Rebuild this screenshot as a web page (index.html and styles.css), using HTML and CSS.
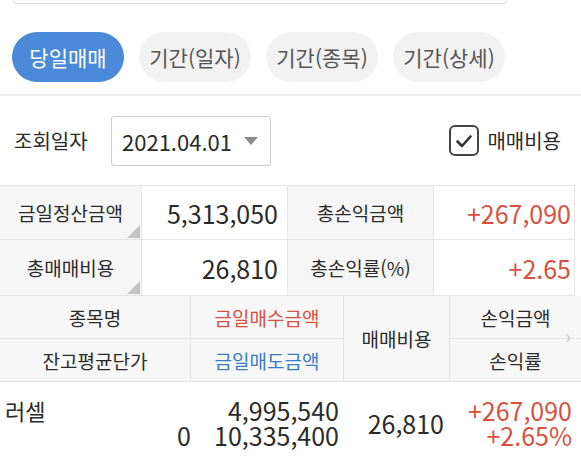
FILE: index.html
```html
<!DOCTYPE html>
<html lang="ko">
<head>
<meta charset="utf-8">
<link rel="stylesheet" href="styles.css">
</head>
<body>
<div class="topbox"></div>
<div class="tabs">
  <div class="tab active">당일매매</div>
  <div class="tab">기간(일자)</div>
  <div class="tab">기간(종목)</div>
  <div class="tab">기간(상세)</div>
</div>
<div class="sep"></div>
<div class="query">
  <div class="qlabel">조회일자</div>
  <div class="select">
    <span class="date">2021.04.01</span>
    <span class="arrow"></span>
  </div>
  <div class="check">
    <span class="box">
      <svg width="22" height="22" viewBox="0 0 22 22"><path d="M4.5 11.5 L9 16 L17.5 6.5" fill="none" stroke="#333" stroke-width="2.6" stroke-linecap="round" stroke-linejoin="round"/></svg>
    </span>
    <span class="clabel">매매비용</span>
  </div>
</div>
<div class="summary">
  <div class="slabel corner">금일정산금액</div>
  <div class="sval">5,313,050</div>
  <div class="slabel">총손익금액</div>
  <div class="sval red">+267,090</div>
  <div class="slabel corner">총매매비용</div>
  <div class="sval">26,810</div>
  <div class="slabel">총손익률(%)</div>
  <div class="sval red">+2.65</div>
</div>
<div class="head">
  <div class="hc">종목명</div>
  <div class="hc red">금일매수금액</div>
  <div class="hc span2">매매비용</div>
  <div class="hc">손익금액</div>
  <div class="hc">잔고평균단가</div>
  <div class="hc blue">금일매도금액</div>
  <div class="hc">손익률</div>
  <span class="chev">›</span>
</div>
<div class="row">
  <div class="dc c1">
    <div class="name">러셀</div>
    <div class="num">0</div>
  </div>
  <div class="dc c2">
    <div>4,995,540</div>
    <div>10,335,400</div>
  </div>
  <div class="dc c3">26,810</div>
  <div class="dc c4 red">
    <div>+267,090</div>
    <div>+2.65%</div>
  </div>
</div>
</body>
</html>
```
FILE: styles.css
```css
* { box-sizing: border-box; }
html, body { margin: 0; padding: 0; background: #fff; }
body {
  width: 581px;
  height: 464px;
  overflow: hidden;
  font-family: "Noto Sans CJK KR", "Noto Sans", sans-serif;
  color: #2b2b2b;
}
.red { color: #d9503f; }
.blue { color: #3b7bc4; }

.topbox {
  margin: 0 74px 0 13px;
  height: 4px;
  border: 1px solid #dcdcdc;
  border-top: none;
  border-radius: 0 0 6px 6px;
}

.tabs {
  display: flex;
  gap: 15px;
  padding: 28px 0 0 12px;
}
.tab {
  width: 112px;
  height: 50px;
  border-radius: 25px;
  background: #f2f2f2;
  color: #555;
  font-size: 21px;
  display: flex;
  align-items: center;
  justify-content: center;
}
.tab.active {
  background: #4a8ad9;
  color: #fff;
}

.sep {
  margin-top: 12px;
  height: 2px;
  background: #eeeeee;
}

.query {
  height: 89px;
  display: flex;
  align-items: center;
  padding: 0 20px 0 14px;
}
.qlabel {
  font-size: 20px;
  width: 97px;
}
.select {
  width: 160px;
  height: 50px;
  border: 1px solid #cfcfcf;
  border-radius: 3px;
  display: flex;
  align-items: center;
  padding: 0 12px 0 10px;
  justify-content: space-between;
}
.date { font-size: 22px; }
.arrow {
  width: 0; height: 0;
  border-left: 7px solid transparent;
  border-right: 7px solid transparent;
  border-top: 8px solid #8a8a8a;
}
.check {
  margin-left: auto;
  display: flex;
  align-items: center;
  gap: 8px;
}
.box {
  width: 30px;
  height: 31px;
  border: 2.5px solid #444;
  border-radius: 6px;
  display: flex;
  align-items: center;
  justify-content: center;
}
.clabel { font-size: 20px; }

.summary {
  display: grid;
  grid-template-columns: 142px 146px 146px 141px;
  grid-template-rows: 54px 56px;
  border-top: 1px solid #e6e6e6;
  width: 575px;
}
.summary > div {
  border-right: 1px solid #e6e6e6;
  border-bottom: 1px solid #e6e6e6;
  display: flex;
  align-items: center;
  position: relative;
}
.slabel {
  background: #f6f6f6;
  justify-content: center;
  font-size: 19px;
}
.corner::after {
  content: "";
  position: absolute;
  right: 1px;
  bottom: 1px;
  width: 0; height: 0;
  border-left: 13px solid transparent;
  border-bottom: 13px solid #c4c4c4;
}
.sval {
  justify-content: flex-end;
  padding-right: 9px;
  font-size: 25px;
}
.summary .sval:nth-child(4), .summary .sval:nth-child(8) { padding-right: 3px; }

.head {
  display: grid;
  grid-template-columns: 191px 153px 106px 131px;
  grid-template-rows: 43px 43px;
  background: #f7f7f7;
  position: relative;
}
.hc {
  border-right: 1px solid #e3e3e3;
  border-bottom: 1px solid #e3e3e3;
  display: flex;
  align-items: center;
  justify-content: center;
  font-size: 19px;
}
.hc:nth-child(4), .hc:nth-child(7) { border-right: none; }
.span2 { grid-row: span 2; grid-column: 3; }
.hc:nth-child(1) { grid-column: 1; grid-row: 1; }
.hc:nth-child(2) { grid-column: 2; grid-row: 1; }
.hc:nth-child(4) { grid-column: 4; grid-row: 1; }
.hc:nth-child(5) { grid-column: 1; grid-row: 2; }
.hc:nth-child(6) { grid-column: 2; grid-row: 2; }
.hc:nth-child(7) { grid-column: 4; grid-row: 2; }
.chev {
  position: absolute;
  right: 10px;
  top: 30px;
  font-size: 20px;
  color: #c8c8c8;
  line-height: 20px;
}

.row {
  display: grid;
  grid-template-columns: 191px 153px 106px 131px;
  padding-top: 16px;
  font-size: 25px;
  line-height: 25px;
}
.dc { display: flex; flex-direction: column; }
.c1 { padding: 0 0 0 5px; }
.c1 .name { font-size: 22px; line-height: 25px; }
.c1 .num { align-self: flex-end; }
.c2 { align-items: flex-end; padding-right: 5px; }
.c3 { align-items: flex-end; justify-content: center; padding-right: 6px; }
.c4 { align-items: flex-end; padding-right: 9px; }
```
